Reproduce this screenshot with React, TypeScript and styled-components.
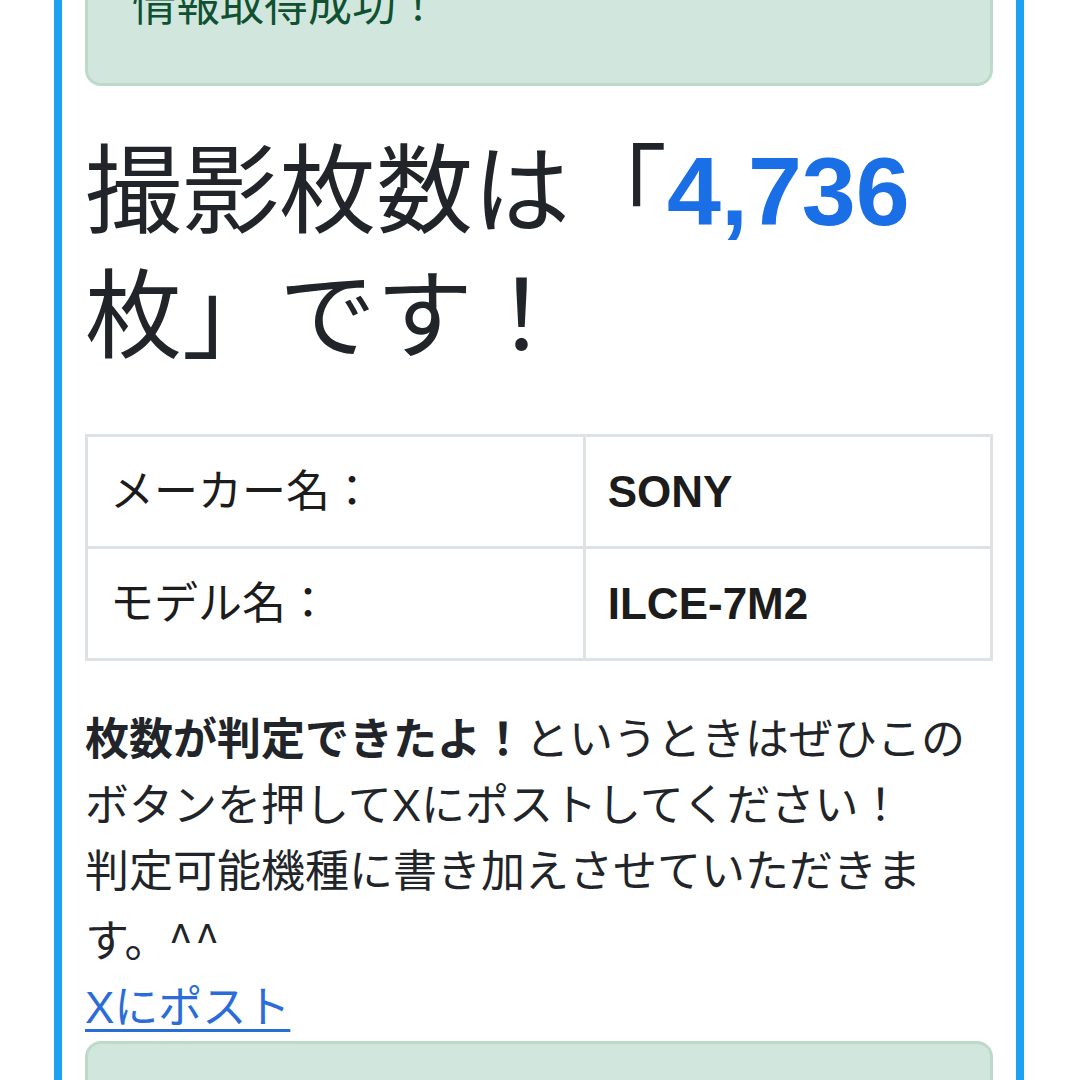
import React from "react";
import styled, { createGlobalStyle } from "styled-components";

const GlobalStyle = createGlobalStyle`
  html, body {
    margin: 0;
    padding: 0;
    background: #ffffff;
  }
  body {
    font-family: "Liberation Sans", "Noto Sans CJK JP", sans-serif;
    color: #212529;
    font-size: 44px;
    line-height: 66px;
  }
`;

const Viewport = styled.div`
  height: 1080px;
  overflow: hidden;
  padding: 0 56px 0 54px;
`;

const Card = styled.section`
  margin-top: -105px;
  border: 8px solid #1da1f2;
  padding: 23px 23px;
  display: flex;
  flex-direction: column;
`;

const Alert = styled.div`
  background: #d1e7dd;
  border: 3px solid #bcd9c9;
  border-radius: 16px;
  color: #0f5132;
  padding: 44px;
  font-size: 44px;
  line-height: 66px;
  min-height: 66px;
`;

const Heading = styled.h1`
  margin: 43px 0 55px;
  font-size: 97px;
  line-height: 125px;
  font-weight: 400;
  color: #212529;
`;

const Count = styled.span`
  color: #1a6ee6;
  font-weight: 700;
`;

const InfoTable = styled.table`
  width: 100%;
  border-collapse: collapse;
  margin-bottom: 46px;
`;

const Cell = styled.td<{ $strong?: boolean; $w?: string }>`
  border: 3px solid #dfe2e5;
  padding: 22px 22px 21px;
  font-size: 44px;
  line-height: 66px;
  vertical-align: middle;
  color: #1c1c1c;
  font-weight: ${(p) => (p.$strong ? 700 : 400)};
  width: ${(p) => p.$w ?? "auto"};
`;

const Message = styled.p`
  margin: 0;
  font-size: 44px;
  line-height: 66px;
  color: #212529;
`;

const Strong = styled.strong`
  font-weight: 700;
`;

const Smiley = styled.span`
  font-family: "Noto Sans CJK JP", sans-serif;
  letter-spacing: 2px;
`;

const PostLink = styled.a`
  display: block;
  align-self: flex-start;
  color: #2a6dd9;
  text-decoration: underline;
  text-decoration-thickness: 3px;
  text-underline-offset: 6px;
  font-size: 44px;
  line-height: 66px;
`;

const BottomAlert = styled(Alert)`
  margin-top: 0;
`;

const rows = [
  { label: "メーカー名：", value: "SONY" },
  { label: "モデル名：", value: "ILCE-7M2" },
];

export default function App() {
  return (
    <>
      <GlobalStyle />
      <Viewport>
        <Card>
          <Alert>情報取得成功！</Alert>
          <Heading>
            撮影枚数は「<Count>4,736</Count>枚」です！
          </Heading>
          <InfoTable>
            <tbody>
              {rows.map((r) => (
                <tr key={r.label}>
                  <Cell $w="55%">{r.label}</Cell>
                  <Cell $strong>{r.value}</Cell>
                </tr>
              ))}
            </tbody>
          </InfoTable>
          <Message>
            <Strong>枚数が判定できたよ！</Strong>というときはぜひこのボタンを押してXにポストしてください！
            <br />
            判定可能機種に書き加えさせていただきます。<Smiley>^^</Smiley>
          </Message>
          <PostLink href="#">Xにポスト</PostLink>
          <BottomAlert>&nbsp;</BottomAlert>
        </Card>
      </Viewport>
    </>
  );
}
